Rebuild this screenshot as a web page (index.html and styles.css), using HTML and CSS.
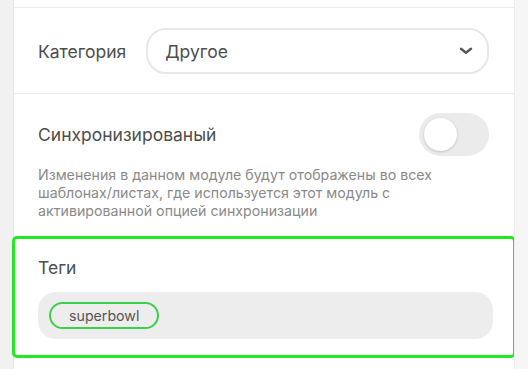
FILE: index.html
```html
<!DOCTYPE html>
<html lang="ru">
<head>
<meta charset="utf-8">
<link rel="stylesheet" href="styles.css">
</head>
<body>
<div class="page">
  <div class="side-left"></div>
  <div class="panel">
    <div class="prev-row"></div>
    <div class="row category">
      <span class="label">Категория</span>
      <div class="select">
        <span class="select-value">Другое</span>
        <svg class="chevron" width="14" height="8" viewBox="0 0 14 8"><path d="M2 1.8 L7 5.8 L12 1.8" fill="none" stroke="#555" stroke-width="2.4" stroke-linecap="round" stroke-linejoin="round"/></svg>
      </div>
    </div>
    <div class="row sync">
      <div class="sync-head">
        <span class="label">Синхронизированый</span>
        <div class="toggle"><div class="knob"></div></div>
      </div>
      <p class="desc">Изменения в данном модуле будут отображены во всех шаблонах/листах, где используется этот модуль с активированной опцией синхронизации</p>
    </div>
    <div class="tags">
      <div class="label">Теги</div>
      <div class="tag-input">
        <span class="chip">superbowl</span>
      </div>
    </div>
  </div>
  <div class="side-right"></div>
</div>
</body>
</html>
```
FILE: styles.css
```css
html, body {
  margin: 0;
  padding: 0;
  background: #f5f5f5;
}
body {
  font-family: Inter, "Liberation Sans", sans-serif;
  width: 528px;
  height: 369px;
  overflow: hidden;
}
.page {
  display: flex;
  height: 369px;
}
.side-left {
  width: 13px;
  background: #f1f1f1;
  border-right: 1px solid #e4e4e4;
}
.panel {
  width: 500px;
  background: #fff;
  display: flex;
  flex-direction: column;
}
.side-right {
  flex: 1;
  background: #f6f6f6;
  border-left: 1px solid #ececec;
}
.prev-row {
  height: 7px;
  border-bottom: 1px solid #ececec;
}
.row {
  padding: 0 0 0 24px;
}
.label {
  font-size: 17.5px;
  color: #4d4d4d;
}
.category {
  display: flex;
  align-items: center;
  gap: 20px;
  padding-top: 20px;
  padding-bottom: 19px;
  border-bottom: 1px solid #ececec;
}
.select {
  height: 42px;
  border: 2px solid #e8e8e8;
  border-radius: 20px;
  display: flex;
  align-items: center;
  justify-content: space-between;
  padding: 0 14px 0 17px;
  box-sizing: content-box;
  width: 308px;
}
.select-value {
  font-size: 17.5px;
  color: #4d4d4d;
}
.chevron {
  display: block;
}
.sync {
  padding-top: 19px;
  padding-bottom: 19px;
}
.sync-head {
  display: flex;
  align-items: center;
  justify-content: space-between;
  padding-right: 25px;
}
.toggle {
  width: 70px;
  height: 43px;
  border-radius: 22px;
  background: #ebebeb;
  display: flex;
  align-items: center;
  padding-left: 5px;
  box-sizing: border-box;
}
.knob {
  width: 33px;
  height: 33px;
  border-radius: 50%;
  background: #fff;
  box-shadow: 0 1px 3px rgba(0,0,0,0.18);
}
.desc {
  margin: 10px 0 0;
  font-size: 14.2px;
  line-height: 18px;
  color: #8a8a8a;
  width: 440px;
}
.tags {
  margin-top: -1px;
  height: 118px;
  box-sizing: border-box;
  padding: 19px 21px 16px 24px;
  border-radius: 3px;
  outline: 3px solid #22ea22;
  outline-offset: -1px;
  display: flex;
  flex-direction: column;
  gap: 14px;
}
.tag-input {
  height: 47px;
  background: #ededed;
  border-radius: 18px;
  display: flex;
  align-items: center;
  padding-left: 11px;
}
.chip {
  font-size: 14.2px;
  color: #555;
  border: 2px solid #3ccf4a;
  border-radius: 14px;
  height: 23px;
  line-height: 23px;
  padding: 0 18px;
}
```
